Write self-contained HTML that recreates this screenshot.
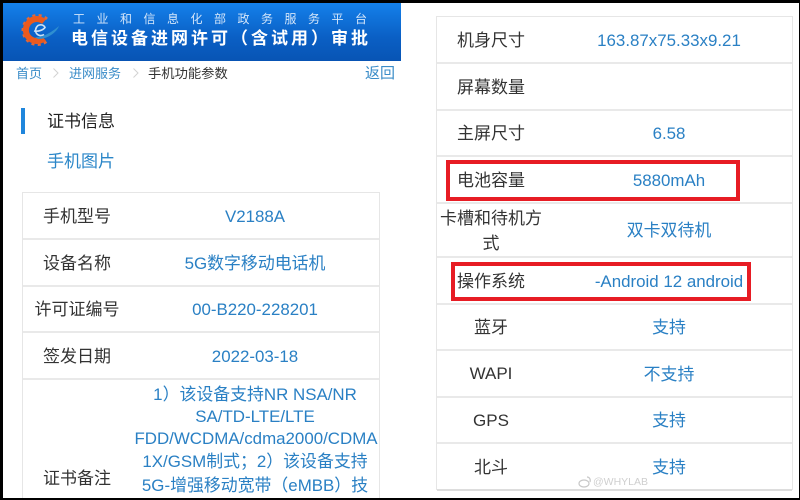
<!DOCTYPE html>
<html lang="zh">
<head>
<meta charset="utf-8">
<title>电信设备进网许可</title>
<style>
html,body{margin:0;padding:0;background:#000;}
#p{position:relative;width:800px;height:500px;overflow:hidden;background:#000;font-family:"Liberation Sans","Noto Sans CJK SC",sans-serif;filter:blur(.3px);}
#w{position:absolute;left:3px;top:3px;width:796px;height:495px;background:#fff;overflow:hidden;}
.a{position:absolute;white-space:nowrap;line-height:24px;transform:translateY(1px);}
.t{position:absolute;font-size:17px;line-height:24px;white-space:nowrap;transform:translate(-50%,calc(-50% + 1px));}
.k{color:#333;}
.v{color:#2a80c4;font-size:16.9px;}
.h{position:absolute;height:2px;background:#e9e9e9;}
.b{position:absolute;background:#e6e6e6;}
.r{position:absolute;border:4.5px solid #e71c24;box-sizing:border-box;}
#clip{position:absolute;left:0;top:0;width:800px;height:498px;overflow:hidden;}
</style>
</head>
<body>
<div id="p">
<div id="w"></div>
<div id="clip">

<div style="position:absolute;left:3px;top:3px;width:398px;height:58px;background:linear-gradient(#1480ea,#0a5fc4 60%,#0854b4);"></div>

<svg style="position:absolute;left:20px;top:11px" width="42" height="38" viewBox="0 0 42 38">
<path d="M27 8A14.5 14.5 0 1 0 27 30" fill="none" stroke="#e2683a" stroke-width="3" stroke-dasharray="3 3.2"/>
<path d="M24 10.6A11 11 0 1 0 24 27.4" fill="none" stroke="#ea5a1e" stroke-width="6"/>
<path d="M14 20c4 .8 9-.8 11-3.500-1-2.500-4-3.500-7-2-2.500 2-3.500 6-1 8.500 2 2 5 2 7 .5" fill="none" stroke="#cfe2f4" stroke-width="1.6"/>
<path d="M15 26c8 1 18-6 24-11-2 6-11 13-21 13z" fill="#2f8fd0"/>
</svg>

<div class="a" style="left:73px;top:5.500px;color:#d4e6fa;font-size:12px;letter-spacing:11.5px;">工业和信息化部政务服务平台</div>
<div class="a" style="left:71px;top:26px;color:#fff;font-size:17px;font-weight:bold;letter-spacing:3px;">电信设备进网许可（含试用）审批</div>

<div class="a" style="left:16px;top:61px;color:#3a8cc8;font-size:13px;">首页</div>
<svg style="position:absolute;left:52px;top:67px" width="8" height="12" viewBox="0 0 8 12"><path d="M1.5 1.5L6 6L1.5 10.500" fill="none" stroke="#d2d2d2" stroke-width="1"/></svg>
<div class="a" style="left:69px;top:61px;color:#3a8cc8;font-size:13px;">进网服务</div>
<svg style="position:absolute;left:132px;top:67px" width="8" height="12" viewBox="0 0 8 12"><path d="M1.5 1.5L6 6L1.5 10.500" fill="none" stroke="#d2d2d2" stroke-width="1"/></svg>
<div class="a" style="left:148px;top:61px;color:#333;font-size:13.3px;">手机功能参数</div>
<div class="a" style="left:365px;top:61px;color:#3a8cc8;font-size:15px;">返回</div>

<div style="position:absolute;left:21px;top:108px;width:4px;height:26px;background:#1f86dc;"></div>
<div class="a" style="left:47px;top:109px;color:#222;font-size:17px;">证书信息</div>
<div class="a" style="left:47px;top:149px;color:#2a86c8;font-size:17px;">手机图片</div>

<!-- left table -->
<div class="b" style="left:22px;top:192px;width:358px;height:1px;"></div>
<div class="b" style="left:22px;top:192px;width:1px;height:306px;"></div>
<div class="b" style="left:379px;top:192px;width:1px;height:306px;"></div>
<div class="h" style="left:23px;top:238px;width:356px;"></div>
<div class="h" style="left:23px;top:285px;width:356px;"></div>
<div class="h" style="left:23px;top:331px;width:356px;"></div>
<div class="h" style="left:23px;top:378px;width:356px;"></div>

<div class="t k" style="left:77px;top:216px;">手机型号</div>
<div class="t v" style="left:255px;top:216px;">V2188A</div>
<div class="t k" style="left:77px;top:263px;">设备名称</div>
<div class="t v" style="left:255px;top:263px;">5G数字移动电话机</div>
<div class="t k" style="left:77px;top:309px;">许可证编号</div>
<div class="t v" style="left:255px;top:309px;">00-B220-228201</div>
<div class="t k" style="left:77px;top:356px;">签发日期</div>
<div class="t v" style="left:255px;top:356px;">2022-03-18</div>
<div class="t k" style="left:77px;top:478px;">证书备注</div>
<div class="t v" style="left:255px;top:394px;">1）该设备支持NR NSA/NR</div>
<div class="t v" style="left:255px;top:416px;">SA/TD-LTE/LTE</div>
<div class="t v" style="left:256px;top:438px;">FDD/WCDMA/cdma2000/CDMA</div>
<div class="t v" style="left:255px;top:461px;">1X/GSM制式；2）该设备支持</div>
<div class="t v" style="left:255px;top:485px;">5G-增强移动宽带（eMBB）技</div>

<!-- right table -->
<div class="b" style="left:436px;top:16px;width:357px;height:1px;"></div>
<div class="b" style="left:436px;top:16px;width:1px;height:474px;"></div>
<div class="b" style="left:792px;top:16px;width:1px;height:474px;"></div>
<div class="h" style="left:437px;top:62px;width:355px;"></div>
<div class="h" style="left:437px;top:109px;width:355px;"></div>
<div class="h" style="left:437px;top:155px;width:355px;"></div>
<div class="h" style="left:437px;top:202px;width:355px;"></div>
<div class="h" style="left:437px;top:256px;width:355px;"></div>
<div class="h" style="left:437px;top:303px;width:355px;"></div>
<div class="h" style="left:437px;top:349px;width:355px;"></div>
<div class="h" style="left:437px;top:396px;width:355px;"></div>
<div class="h" style="left:437px;top:442px;width:355px;"></div>
<div class="h" style="left:437px;top:489px;width:355px;background:#ddd;"></div>

<div class="t k" style="left:491px;top:40px;">机身尺寸</div>
<div class="t v" style="left:669px;top:40px;">163.87x75.33x9.21</div>
<div class="t k" style="left:491px;top:87px;">屏幕数量</div>
<div class="t k" style="left:491px;top:133px;">主屏尺寸</div>
<div class="t v" style="left:669px;top:133px;">6.58</div>
<div class="t k" style="left:491px;top:180px;">电池容量</div>
<div class="t v" style="left:669px;top:180px;">5880mAh</div>
<div class="t k" style="left:491px;top:218px;">卡槽和待机方</div>
<div class="t k" style="left:491px;top:243px;">式</div>
<div class="t v" style="left:669px;top:230px;">双卡双待机</div>
<div class="t k" style="left:491px;top:281px;">操作系统</div>
<div class="t v" style="left:669px;top:281px;">-Android 12 android</div>
<div class="t k" style="left:491px;top:327px;">蓝牙</div>
<div class="t v" style="left:669px;top:327px;">支持</div>
<div class="t k" style="left:491px;top:373px;">WAPI</div>
<div class="t v" style="left:669px;top:374px;">不支持</div>
<div class="t k" style="left:491px;top:420px;">GPS</div>
<div class="t v" style="left:669px;top:420px;">支持</div>
<div class="t k" style="left:491px;top:467px;">北斗</div>
<div class="t v" style="left:669px;top:467px;">支持</div>

<div class="r" style="left:446px;top:160px;width:294px;height:41px;"></div>
<div class="r" style="left:451px;top:262px;width:300px;height:39px;"></div>

<svg style="position:absolute;left:578px;top:476px" width="14" height="12" viewBox="0 0 14 12">
<ellipse cx="6" cy="7.5" rx="5" ry="3.5" fill="none" stroke="#c8c8c8" stroke-width="1.2"/>
<path d="M9 1c2 0 4 2 3 5" fill="none" stroke="#c8c8c8" stroke-width="1.2"/>
</svg>
<div class="a" style="left:593px;top:469px;color:#cfcfcf;font-size:10.5px;">@WHYLAB</div>
</div>
</div>
</body>
</html>
